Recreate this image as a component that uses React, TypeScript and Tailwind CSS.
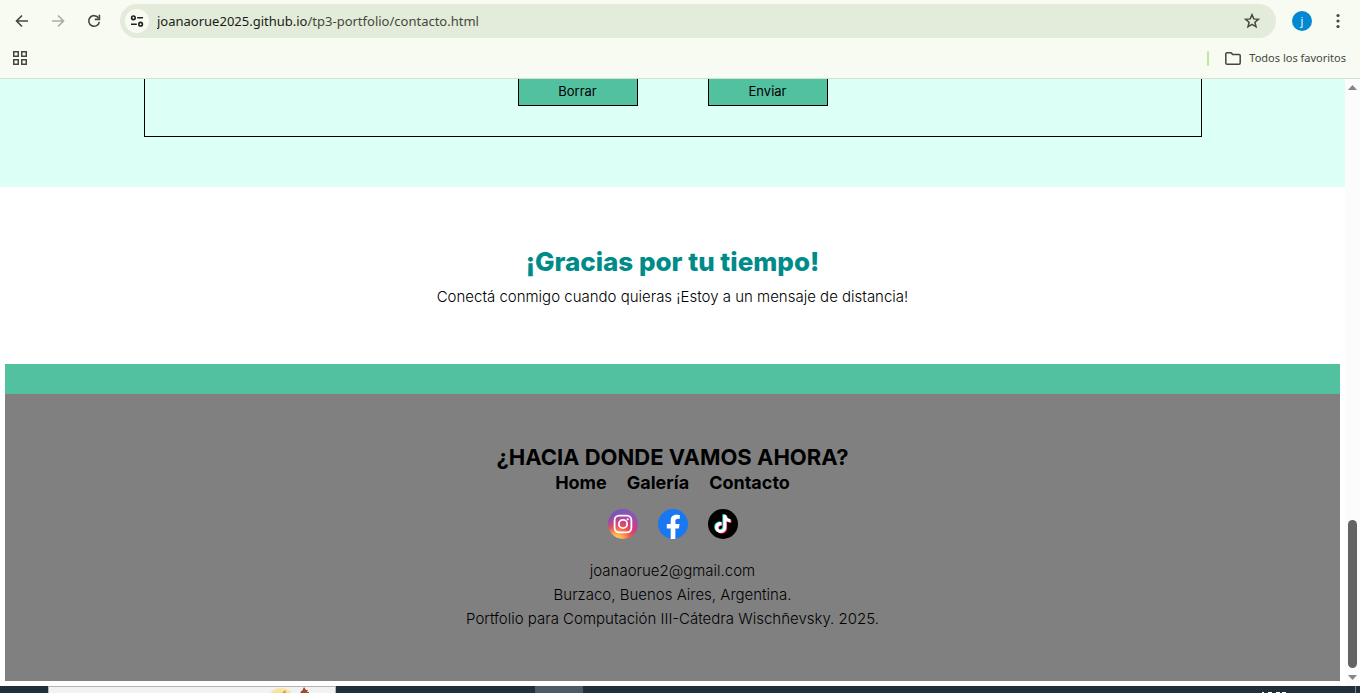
import type { ReactNode } from "react";

function BrowserBar() {
  return (
    <header className="border-b border-[#cfe3d3] bg-[#f8fbf2] font-['Noto_Sans','Open_Sans',sans-serif] text-[#43483f]">
      <div className="flex h-[42px] items-center pr-[14px] pl-[14px]">
        <button aria-label="Atrás" className="flex w-4 justify-center">
          <Glyph><path d="M14 8H3M8 2.5 2.5 8 8 13.5" /></Glyph>
        </button>
        <button aria-label="Adelante" disabled className="ml-5 flex w-4 justify-center text-[#a9ada4]">
          <Glyph><path d="M2 8h11M8 2.5 13.5 8 8 13.5" /></Glyph>
        </button>
        <button aria-label="Volver a cargar" className="ml-5 flex w-4 justify-center">
          <Glyph>
            <path d="M12.6 5.2A5.3 5.3 0 1 0 13.3 8.8" />
            <path d="M13.4 1.8v4.6H8.8" />
          </Glyph>
        </button>
        <div className="ml-[18px] flex h-[34px] min-w-0 flex-1 items-center rounded-full bg-[#e3ebda] pr-4 pl-[5px]">
          <button aria-label="Información del sitio" className="flex size-6 shrink-0 items-center justify-center rounded-full bg-[#f8fbf2] text-[#1c211b]">
            <svg width="14" height="14" viewBox="0 0 14 14" fill="none" stroke="currentColor" strokeWidth="1.6">
              <circle cx="3.4" cy="3.8" r="1.8" />
              <path d="M7.2 3.8H13M1 10.2h5.8" />
              <circle cx="10.6" cy="10.2" r="1.8" />
            </svg>
          </button>
          <p className="ml-2 min-w-0 flex-1 truncate text-[13px] leading-5">
            <span className="text-[#191d18]">joanaorue2025.github.io</span>/tp3-portfolio/contacto.html
          </p>
          <button aria-label="Agregar a favoritos">
            <svg width="16" height="16" viewBox="0 0 16 16" fill="none" stroke="currentColor" strokeWidth="1.5">
              <path d="m8 1.7 1.8 4.2 4.6.4-3.5 3 1.1 4.5L8 11.4l-4 2.4 1.1-4.5-3.5-3 4.6-.4z" />
            </svg>
          </button>
        </div>
        <button aria-label="Perfil" className="ml-4 flex size-5 items-center justify-center rounded-full bg-[#0288d1] text-[11px] leading-5 text-white">
          j
        </button>
        <button aria-label="Menú" className="ml-[18px] flex w-4 justify-center">
          <svg width="4" height="16" viewBox="0 0 4 16" fill="currentColor">
            <circle cx="2" cy="2.5" r="1.6" />
            <circle cx="2" cy="8" r="1.6" />
            <circle cx="2" cy="13.5" r="1.6" />
          </svg>
        </button>
      </div>
      <div className="flex h-9 items-center pb-1 pl-[13px] pr-[14px]">
        <button aria-label="Aplicaciones">
          <svg width="14" height="14" viewBox="0 0 14 14" fill="none" stroke="currentColor" strokeWidth="1.5">
            <path d="M.75.75h4.5v4.5H.75zM8.75.75h4.5v4.5h-4.5zM.75 8.75h4.5v4.5H.75zM8.75 8.75h4.5v4.5h-4.5z" />
          </svg>
        </button>
        <span className="ml-auto h-[15px] w-0.5 rounded-full bg-[#b9e8a4]" />
        <button className="ml-4 flex items-center gap-2 text-[11px] leading-4">
          <svg width="16" height="13" viewBox="0 0 16 13" fill="none" stroke="currentColor" strokeWidth="1.5">
            <path d="M.8 2Q.8.8 2 .8h4l1.6 1.6H14q1.2 0 1.2 1.2V11q0 1.2-1.2 1.2H2Q.8 12.2.8 11z" />
          </svg>
          Todos los favoritos
        </button>
      </div>
    </header>
  );
}

function Glyph({ children }: { children: ReactNode }) {
  return (
    <svg width="16" height="16" viewBox="0 0 16 16" fill="none" stroke="currentColor" strokeWidth="1.6">
      {children}
    </svg>
  );
}

function InstagramIcon() {
  return (
    <svg width="30" height="30" viewBox="0 0 30 30">
      <defs>
        <radialGradient id="ig-warm" cx="0.27" cy="1.07" r="1">
          <stop offset="0.05" stopColor="#fedc75" />
          <stop offset="0.28" stopColor="#fba14e" />
          <stop offset="0.5" stopColor="#f2544f" />
          <stop offset="0.72" stopColor="#d13a85" />
          <stop offset="1" stopColor="#8f55b4" />
        </radialGradient>
        <linearGradient id="ig-cool" x1="0.1" y1="0" x2="0.5" y2="0.55">
          <stop offset="0" stopColor="#4a63c8" />
          <stop offset="1" stopColor="#a04aa8" stopOpacity="0" />
        </linearGradient>
      </defs>
      <circle cx="15" cy="15" r="15" fill="url(#ig-warm)" />
      <circle cx="15" cy="15" r="15" fill="url(#ig-cool)" />
      <g fill="none" stroke="#fff" strokeWidth="1.8">
        <rect x="6.6" y="6.6" width="16.8" height="16.8" rx="4.6" />
        <circle cx="15" cy="15" r="4.2" />
      </g>
      <circle cx="19.7" cy="10.3" r="1.1" fill="#fff" />
    </svg>
  );
}

function FacebookIcon() {
  return (
    <svg width="30" height="30" viewBox="0 0 30 30">
      <circle cx="15" cy="15" r="15" fill="#1877f2" />
      <path
        fill="#fff"
        d="M12.7 30V19.4H8.8V15h3.9v-3.4c0-3.8 2.2-5.9 5.7-5.9 1.7 0 3.4.3 3.4.3v3.7h-1.9c-1.9 0-2.5 1.2-2.5 2.4V15h4.2l-.7 4.4h-3.5V29.8a15 15 0 0 1-4.7.1z"
      />
    </svg>
  );
}

const note =
  "M15.7 6h3c.2 2.5 1.8 4.1 4.3 4.3v3.1c-1.6 0-3-.5-4.200-1.300v6.300c0 3.300-2.500 5.700-5.600 5.700s-5.600-2.400-5.600-5.500c0-3.400 2.900-5.900 6.400-5.400v3.200c-1.800-.5-3.300.6-3.300 2.200 0 1.400 1.100 2.400 2.500 2.400 1.500 0 2.500-1 2.500-2.700z";

function TikTokIcon() {
  return (
    <svg width="30" height="30" viewBox="0 0 30 30">
      <circle cx="15" cy="15" r="15" fill="#000" />
      <path d={note} fill="#25f4ee" transform="translate(-1.3 -.7)" />
      <path d={note} fill="#fe2c55" transform="translate(.4 .5)" />
      <path d={note} fill="#fff" transform="translate(-.4 -.1)" />
    </svg>
  );
}

const links = ["Home", "Galería", "Contacto"];
const social = [
  { name: "Instagram", icon: <InstagramIcon /> },
  { name: "Facebook", icon: <FacebookIcon /> },
  { name: "TikTok", icon: <TikTokIcon /> },
];

function Page() {
  return (
    <main className="min-w-0 flex-1 bg-white pb-[5px] text-black">
      <section className="bg-[#dcfff6] pb-[50px]">
        <form className="mx-auto flex max-w-[1058px] justify-center gap-[70px] border-x border-b border-black pb-[30px]">
          <button type="reset" className="h-[27px] w-[120px] border-x border-b border-black bg-[#52c1a0] pb-[3px] text-[13px] leading-4">
            Borrar
          </button>
          <button type="button" className="h-[27px] w-[120px] border-x border-b border-black bg-[#52c1a0] pb-[3px] text-[13px] leading-4">
            Enviar
          </button>
        </form>
      </section>

      <section className="pt-[60px] pb-[55px] text-center">
        <h2 className="text-[26px] leading-[30px] font-extrabold text-[#008b8b]">¡Gracias por tu tiempo!</h2>
        <p className="mt-2 text-[15px] leading-6 font-[350]">Conectá conmigo cuando quieras ¡Estoy a un mensaje de distancia!</p>
      </section>

      <footer className="mx-[5px] border-t-[30px] border-[#52c1a0] bg-[#808080] py-[50px] text-center">
        <h3 className="text-[22px] leading-[27px] font-bold">¿HACIA DONDE VAMOS AHORA?</h3>
        <nav className="flex justify-center gap-5 text-lg leading-[23px] font-bold">
          {links.map((label) => (
            <a key={label} href="#">{label}</a>
          ))}
        </nav>
        <div className="mt-[15px] flex justify-center gap-5">
          {social.map((item) => (
            <a key={item.name} href="#" aria-label={item.name}>{item.icon}</a>
          ))}
        </div>
        <address className="mt-5 text-[15px] leading-6 font-[350] not-italic">
          <p>joanaorue2@gmail.com</p>
          <p>Burzaco, Buenos Aires, Argentina.</p>
          <p>Portfolio para Computación III-Cátedra Wischñevsky. 2025.</p>
        </address>
      </footer>
    </main>
  );
}

function Scrollbar() {
  return (
    <div aria-hidden="true" className="flex w-[15px] flex-col items-center bg-[#fcfcfc] py-[6px]">
      <svg width="9" height="5" viewBox="0 0 9 5" fill="#858585"><path d="M4.5 0 9 5H0z" /></svg>
      <div className="mt-auto mb-[7px] h-[148px] w-[9px] rounded-full bg-[#636363]" />
      <svg width="9" height="5" viewBox="0 0 9 5" fill="#858585"><path d="M4.5 5 9 0H0z" /></svg>
    </div>
  );
}

function Taskbar() {
  return (
    <div aria-hidden="true" className="flex h-[7px] overflow-hidden bg-[#20303a]">
      <div className="ml-12 flex w-72 justify-end border border-b-0 border-[#b5b5b5] bg-[#f2f2f2] pr-[22px]">
        <svg width="44" height="7" viewBox="0 0 44 7">
          <ellipse cx="12" cy="9" rx="11" ry="8" fill="#fae3a0" />
          <path d="m13 6 3-3 2 4z" fill="#d99b4f" />
          <path d="M35 0 37 3h2l-1 2h2v2h-9l1-3h1z" fill="#a34a2a" />
        </svg>
      </div>
      <div className="ml-[199px] w-12 bg-[#4c5b65]" />
      <div className="mr-[68px] ml-auto text-white">
        <svg width="26" height="7" viewBox="0 0 26 7" fill="none" stroke="currentColor">
          <path d="M1 6.5h2M7 6.5h4M15 6.5h4M21 6.5h4" />
        </svg>
      </div>
      <div className="mr-1 w-px bg-[#7d878d]" />
    </div>
  );
}

export default function App() {
  return (
    <div className="flex min-h-screen flex-col bg-white font-['Inter',sans-serif]">
      <BrowserBar />
      <div className="flex flex-1">
        <Page />
        <Scrollbar />
      </div>
      <Taskbar />
    </div>
  );
}
